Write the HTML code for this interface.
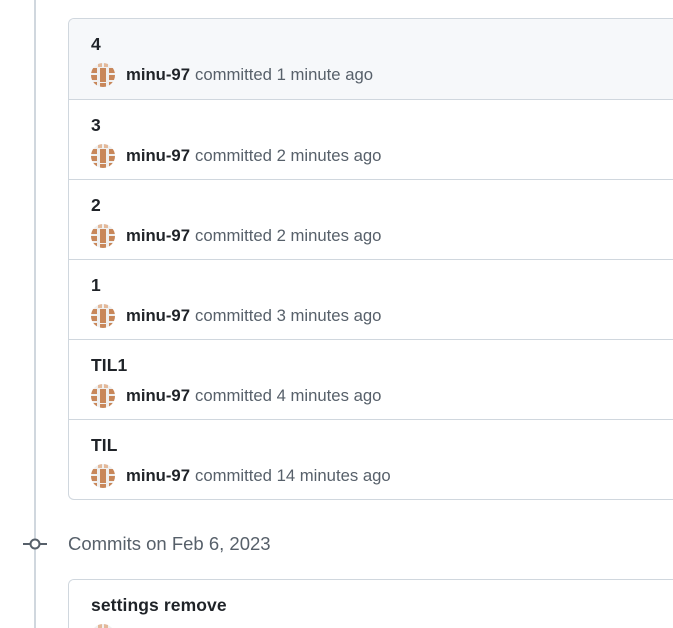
<!DOCTYPE html>
<html style="width:673px;height:628px;overflow:hidden"><head><meta charset="utf-8"><style>
*{box-sizing:border-box;margin:0;padding:0}
body{width:673px;height:628px;overflow:hidden;background:#fff;font-family:"Liberation Sans",sans-serif;position:relative;color:#1f2328}
.line{position:absolute;left:34px;top:0;width:2px;height:628px;background:#d0d7de}
.card{position:absolute;left:68px;width:605px;border:1px solid #d0d7de;border-right:none;border-radius:6px 0 0 6px;background:#fff;overflow:hidden}
.row{height:80px;border-top:1px solid #d0d7de;position:relative}
.row:first-child{border-top:none;background:#f6f8fa;height:80px}
.t{position:absolute;left:22px;top:15px;font-size:17.5px;font-weight:bold;color:#1f2328;letter-spacing:0.1px}
.m{position:absolute;left:22px;top:44px;height:24px;display:flex;align-items:center;font-size:16.7px;color:#57606a;white-space:nowrap}
.m svg{margin-right:11px}
.m b{color:#1f2328;margin-right:5px}
.date{position:absolute;left:68px;top:533px;font-size:18.5px;color:#57606a}
</style></head><body>
<div class="line"></div>
<svg style="position:absolute;left:23px;top:537px" width="24" height="14"><line x1="0" y1="7" x2="24" y2="7" stroke="#57606a" stroke-width="2"/><circle cx="12" cy="7" r="4.5" fill="#fff" stroke="#57606a" stroke-width="2"/></svg>
<svg width="0" height="0" style="position:absolute"><defs><g id="av"><clipPath id="cp"><circle cx="12" cy="12" r="12"/></clipPath><g clip-path="url(#cp)"><rect width="24" height="24" fill="#f0f0f0"/><g fill="#c8875a"><rect x="7" y="0" width="4" height="4" fill="#e3b99a"/><rect x="13" y="0" width="4" height="4" fill="#e3b99a"/><rect x="0" y="5" width="6" height="5"/><rect x="18" y="5" width="6" height="5"/><rect x="9" y="5" width="6" height="14"/><rect x="0" y="12" width="6" height="5"/><rect x="18" y="12" width="6" height="5"/><rect x="0" y="19" width="6" height="5"/><rect x="18" y="19" width="6" height="5"/><rect x="9" y="20" width="6" height="4"/></g></g></g></defs></svg>
<div class="card" style="top:18px;height:482px">
<div class="row"><div class="t">4</div><div class="m"><svg width="24" height="24"><use href="#av"/></svg><b>minu-97</b>committed 1 minute ago</div></div>
<div class="row"><div class="t">3</div><div class="m"><svg width="24" height="24"><use href="#av"/></svg><b>minu-97</b>committed 2 minutes ago</div></div>
<div class="row"><div class="t">2</div><div class="m"><svg width="24" height="24"><use href="#av"/></svg><b>minu-97</b>committed 2 minutes ago</div></div>
<div class="row"><div class="t">1</div><div class="m"><svg width="24" height="24"><use href="#av"/></svg><b>minu-97</b>committed 3 minutes ago</div></div>
<div class="row"><div class="t">TIL1</div><div class="m"><svg width="24" height="24"><use href="#av"/></svg><b>minu-97</b>committed 4 minutes ago</div></div>
<div class="row"><div class="t">TIL</div><div class="m"><svg width="24" height="24"><use href="#av"/></svg><b>minu-97</b>committed 14 minutes ago</div></div>
</div>
<div class="date">Commits on Feb 6, 2023</div>
<div class="card" style="top:579px;height:49px;border-bottom:none;border-radius:6px 0 0 0">
<div class="row" style="background:#fff;height:49px"><div class="t">settings remove</div><div class="m"><svg width="24" height="24"><use href="#av"/></svg></div></div>
</div>
</body></html>
